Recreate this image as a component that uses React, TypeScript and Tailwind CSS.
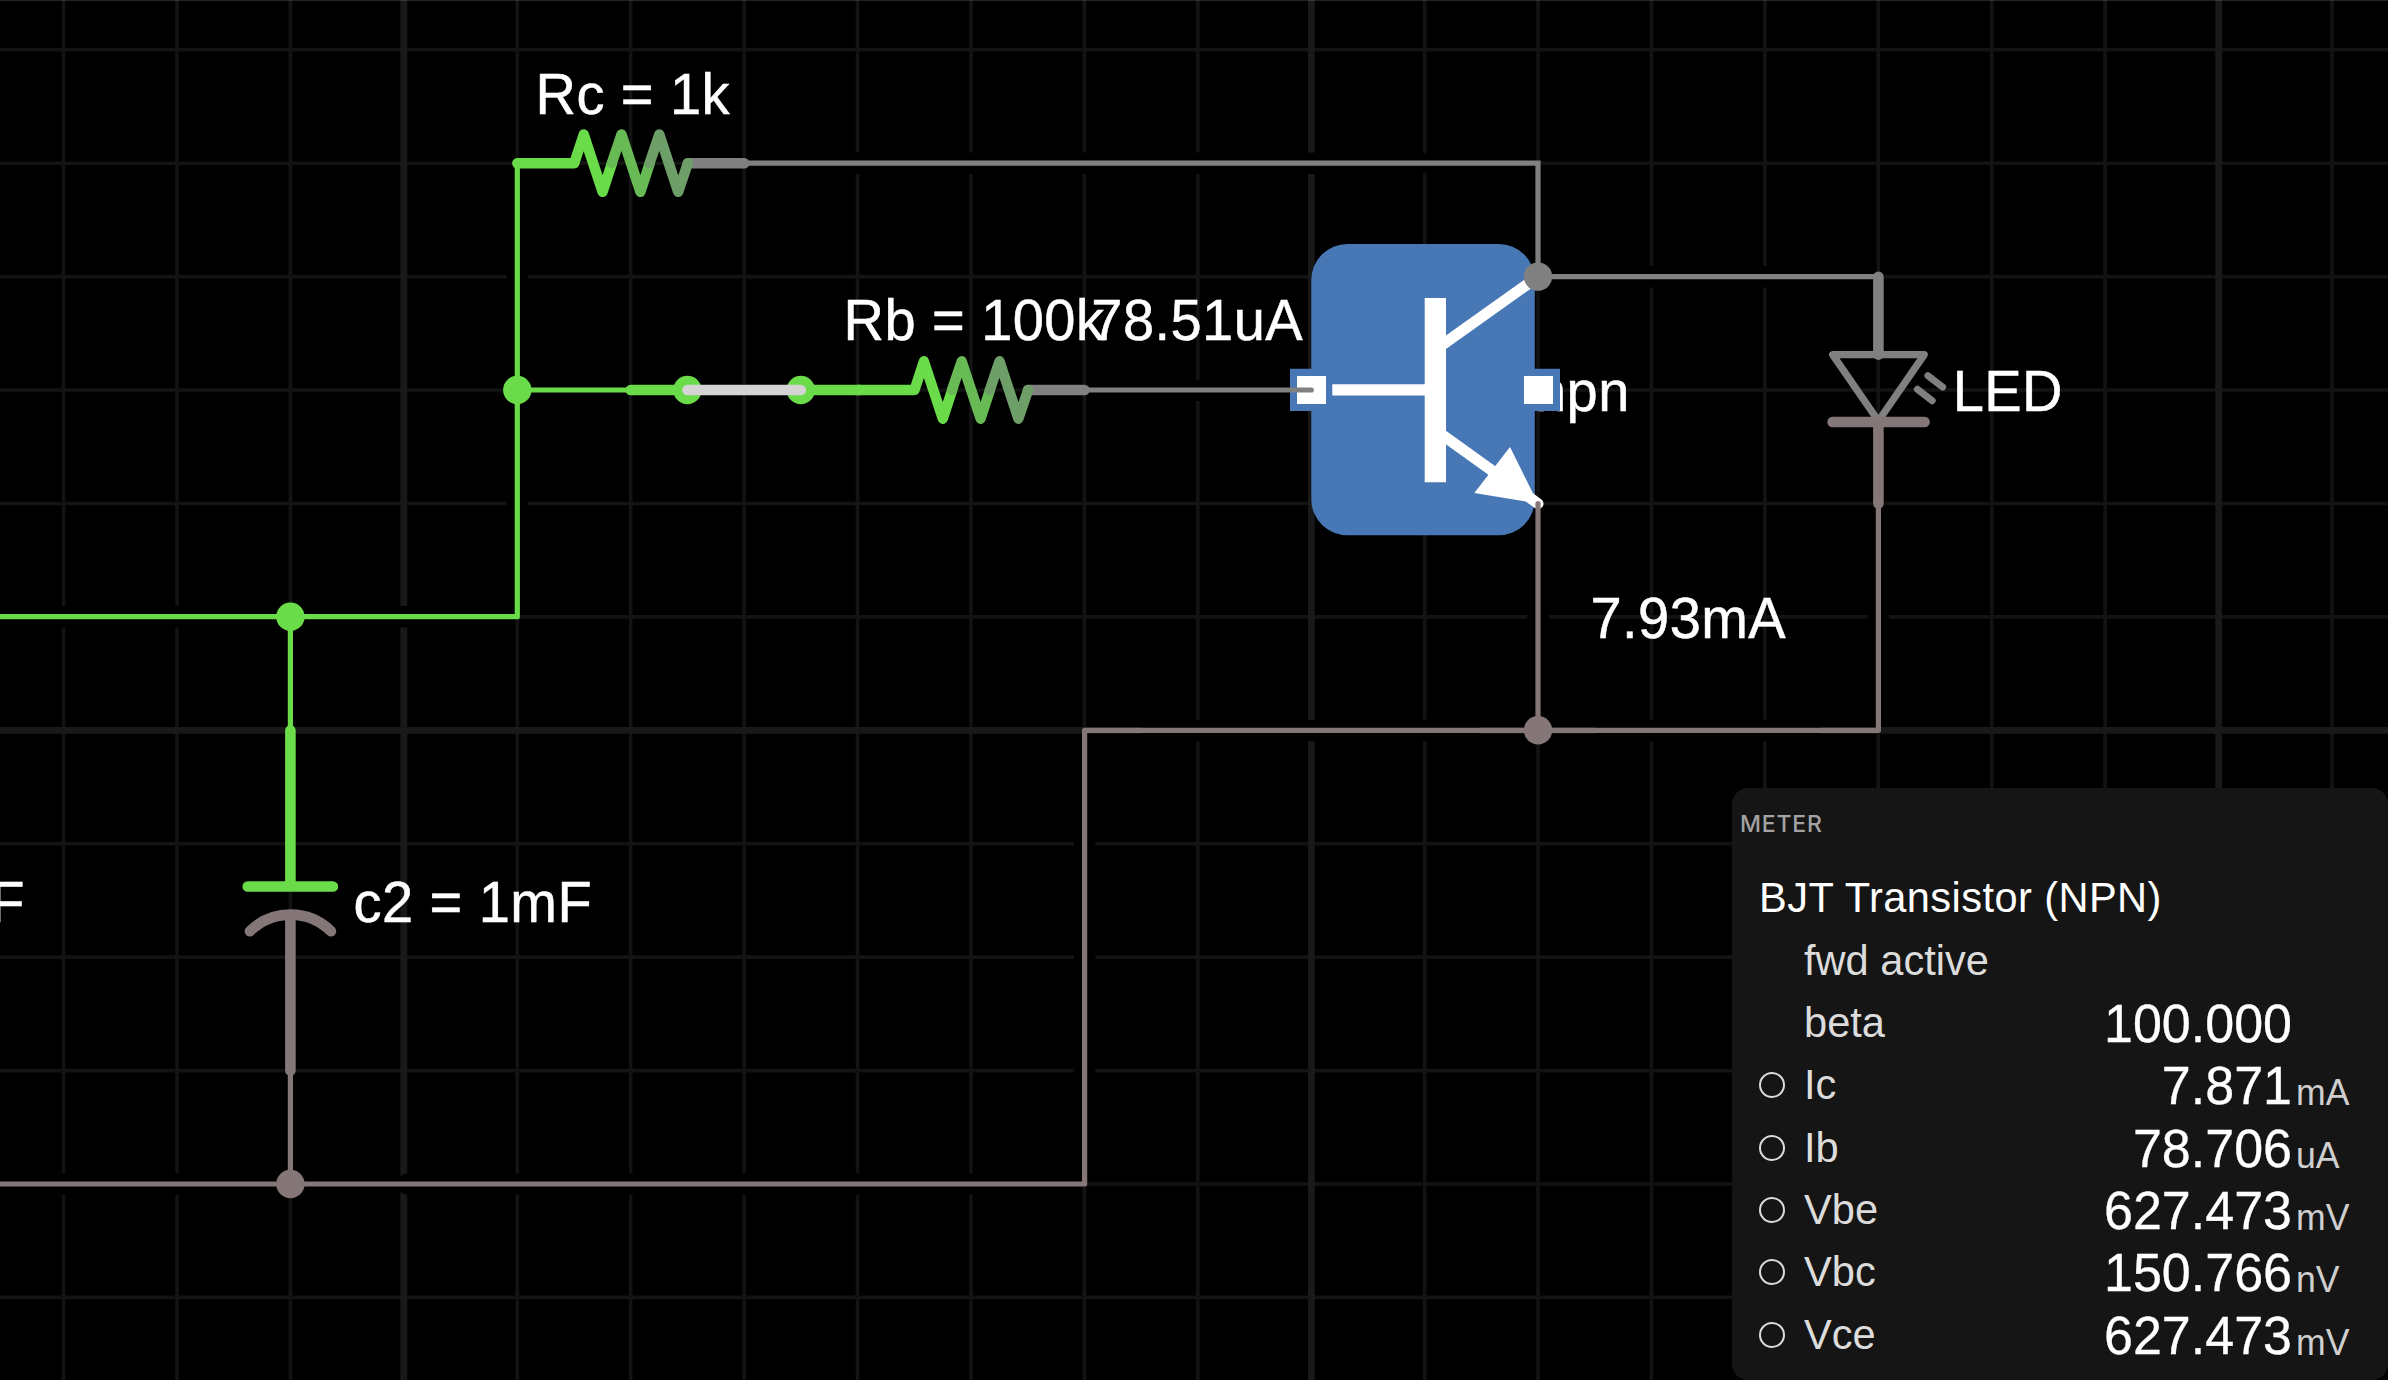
const GREEN = '#6bdc49';
const GRAY = '#808080';
const ROSE = '#857777';
const BLUE = '#4777b4';

const CELL = 113.42;
const columns = Array.from({ length: 21 }, (_, k) => 63.6 + k * CELL);
const rows = Array.from({ length: 12 }, (_, k) => 49.8 + k * CELL);

type Segment = [number, number, number, number];

// Dark gaps that separate a wire from the grid lines it crosses.
const halos: Segment[] = [
  [801, 163.3, 1420, 163.3],
  [517.3, 220, 517.3, 333],
  [517.3, 447, 517.3, 560],
  [0, 616.8, 233, 616.8],
  [347, 616.8, 460, 616.8],
  [1141.6, 390.2, 1254, 390.2],
  [1595, 276.7, 1822, 276.7],
  [1538, 560, 1538, 673.5],
  [1878.4, 560, 1878.4, 673.5],
  [1141.6, 730.4, 1481, 730.4],
  [1595, 730.4, 1821, 730.4],
  [1084.6, 787, 1084.6, 1127],
  [0, 1184.1, 233, 1184.1],
  [408, 1184.1, 1028, 1184.1],
];

const labels: { x: number; y: number; text: string }[] = [
  { x: 535.5, y: 113.7, text: 'Rc = 1k' },
  { x: 843.5, y: 340, text: 'Rb = 100k' },
  { x: 1091.3, y: 340, text: '78.51uA' },
  { x: 1535, y: 410.7, text: 'npn' },
  { x: 1952.7, y: 410.7, text: 'LED' },
  { x: 1590.5, y: 637.7, text: '7.93mA' },
  { x: 353.5, y: 922, text: 'c2 = 1mF' },
  { x: -9.8, y: 922, text: 'F' },
];

function Grid() {
  return (
    <g fill="none">
      <g stroke="#131313" strokeWidth={3.6}>
        {columns.map((x) => (
          <path key={x} d={`M${x} 0V1380`} />
        ))}
        {rows.map((y) => (
          <path key={y} d={`M0 ${y}H2388`} />
        ))}
      </g>
      <g stroke="#191919" strokeWidth={6.8}>
        <path d="M403.8 0V1380M1311.4 0V1380M2218.7 0V1380M0 730.4H2388" />
      </g>
      <g stroke="#000" strokeWidth={21.5}>
        {halos.map(([x1, y1, x2, y2]) => (
          <path key={`${x1}-${y1}`} d={`M${x1} ${y1}L${x2} ${y2}`} />
        ))}
      </g>
      <circle cx={1420} cy={163.3} r={10.7} fill="#000" />
      <circle cx={408} cy={1184.1} r={10.7} fill="#000" />
      <path d="M0 .5H2388" stroke="#fff" strokeOpacity={0.14} />
    </g>
  );
}

function Resistor({ x, y }: { x: number; y: number }) {
  return (
    <g transform={`translate(${x} ${y})`} fill="none" strokeWidth={10.4} strokeLinecap="round" strokeLinejoin="round">
      <path d="M170.4 0H227" stroke={GRAY} />
      <path d="M0 0H57L66.4 -28.7L85.3 28.7L94.7 0" stroke={GREEN} />
      <path d="M94.5 0L104.2 -28.7L123.1 28.7L132.5 0" stroke="#67ba54" />
      <path d="M132.3 0L142 -28.7L160.9 28.7L170.6 0" stroke="#6e9f68" />
    </g>
  );
}

function Capacitor() {
  return (
    <g fill="none" strokeWidth={10.6} strokeLinecap="round">
      <path d="M290.4 730.4V886.5M247.7 886.5H332.9" stroke={GREEN} />
      <path d="M249.9 931.2A58 58 0 0 1 331 931.2M290.4 915V1070.6" stroke={ROSE} />
    </g>
  );
}

function Switch() {
  return (
    <g fill="none" strokeWidth={10.6} strokeLinecap="round">
      <path d="M630.7 390H687.4M800.8 390H860" stroke={GREEN} />
      <circle cx={687.4} cy={390} r={14.2} fill={GREEN} />
      <circle cx={800.8} cy={390} r={14.2} fill={GREEN} />
    </g>
  );
}

function Led() {
  return (
    <g fill="none" strokeLinecap="round" strokeLinejoin="round">
      <path d="M1878.4 276.7V354.6" stroke={GRAY} strokeWidth={10.6} />
      <path d="M1832.6 354.6H1924.3L1878.4 421Z" stroke={GRAY} strokeWidth={7.2} />
      <path d="M1927.9 375.7L1942.6 387M1917.4 389.3L1932.2 400.7" stroke={GRAY} strokeWidth={7} />
      <path d="M1832.6 422H1924.6M1878.4 422V503.6" stroke={ROSE} strokeWidth={10.6} />
    </g>
  );
}

function Transistor() {
  return (
    <g>
      <rect x={1311.3} y={244} width={223.5} height={291.3} rx={36} fill={BLUE} />
      <path d="M1290 368.8h42v42.2h-42zM1517 368.8h43v42.2h-43z" fill={BLUE} />
      <path d="M1297 376h29v28h-29zM1524 376h29v28h-29z" fill="#fff" />
      <path d="M1332.3 384.3H1425v11.2H1332.3zM1424.7 298H1446V482.3H1424.7z" fill="#fff" />
      <path d="M1440 346.5L1538 276.7M1440 433.3L1538 503.6" stroke="#fff" strokeWidth={11} strokeLinecap="round" />
      <path d="M1510 447L1538 503.4L1474.3 493Z" fill="#fff" />
    </g>
  );
}

function Schematic() {
  return (
    <svg viewBox="0 0 2388 1380" className="block h-[1380px] w-[2388px]">
      <Grid />
      <g
        fill="#fff"
        stroke="#fff"
        strokeWidth={0.5}
        fontSize={56}
        letterSpacing={0.45}
        fontFamily="'Liberation Sans', Arial, sans-serif"
      >
        {labels.map(({ x, y, text }) => (
          <text key={text} transform={`translate(${x} ${y}) scale(1 1.04)`}>
            {text}
          </text>
        ))}
      </g>
      <Transistor />
      <g fill="none" strokeWidth={5.2}>
        <path d="M0 616.7H517.3V163.3M517.3 390H632M290.4 616.7V731" stroke={GREEN} strokeLinejoin="round" />
        <path d="M744 163.1H1538V276.7H1878.4" stroke={GRAY} />
        <path d="M1084 390H1311.3" stroke={GRAY} strokeLinecap="round" />
        <path
          d="M0 1184H1084.6V730.3H1878.4V503.6M290.4 1070V1184M1538 503.6V730.4"
          stroke={ROSE}
          strokeLinecap="round"
          strokeLinejoin="round"
        />
      </g>
      <Resistor x={517.3} y={163.2} />
      <Switch />
      <Resistor x={857.5} y={390} />
      <path d="M687.4 390H800.8" stroke="#d4d4d4" strokeWidth={10.6} strokeLinecap="round" />
      <Capacitor />
      <Led />
      <circle cx={517.3} cy={390} r={14.2} fill={GREEN} />
      <circle cx={290.4} cy={616.7} r={14.2} fill={GREEN} />
      <circle cx={1538} cy={276.6} r={14.2} fill={GRAY} />
      <circle cx={1538} cy={730.3} r={14.2} fill={ROSE} />
      <circle cx={290.4} cy={1184} r={14.2} fill={ROSE} />
    </svg>
  );
}

interface Reading {
  label: string;
  value?: string;
  unit?: string;
}

const readings: Reading[] = [
  { label: 'fwd active' },
  { label: 'beta', value: '100.000' },
  { label: 'Ic', value: '7.871', unit: 'mA' },
  { label: 'Ib', value: '78.706', unit: 'uA' },
  { label: 'Vbe', value: '627.473', unit: 'mV' },
  { label: 'Vbc', value: '150.766', unit: 'nV' },
  { label: 'Vce', value: '627.473', unit: 'mV' },
];

function MeterRow({ label, value, unit }: Reading) {
  return (
    <div className="flex h-[62.35px] items-center whitespace-nowrap">
      <div className="flex w-[45px] shrink-0">
        {unit && <span className="size-[26px] rounded-full border-2 border-[#dcdcdc]" />}
      </div>
      <span className="scale-y-[1.03] text-[41.6px] leading-[62px] text-[#dcdcdc]">{label}</span>
      <span className="ml-auto scale-y-[1.03] text-[52px] leading-[62px] text-white [-webkit-text-stroke:0.3px_white]">
        {value}
      </span>
      <span className="w-[96px] shrink-0 scale-y-[1.03] pt-[14px] pl-[4px] text-[35.6px] leading-[46px] text-[#cfcfcf]">
        {unit}
      </span>
    </div>
  );
}

function MeterPanel() {
  return (
    <section className="absolute top-[788px] left-[1732px] h-[592px] w-[656px] rounded-2xl bg-[#151515]">
      <h2 className="pt-[20px] pl-[8px] font-['Inter',sans-serif] text-[23px] leading-8 font-medium tracking-[0.8px] text-[#a3a3a3]">
        METER
      </h2>
      <div className="mt-[27px] pl-[27px] font-['Liberation_Sans',Arial,sans-serif]">
        <h3 className="h-[62.35px] origin-center scale-y-[1.03] text-[41.6px] leading-[62px] tracking-[0.42px] whitespace-nowrap text-white">
          BJT Transistor (NPN)
        </h3>
        {readings.map((r) => (
          <MeterRow key={r.label} {...r} />
        ))}
      </div>
    </section>
  );
}

export default function App() {
  return (
    <main className="relative h-[1380px] w-[2388px] overflow-hidden bg-black">
      <Schematic />
      <MeterPanel />
    </main>
  );
}
